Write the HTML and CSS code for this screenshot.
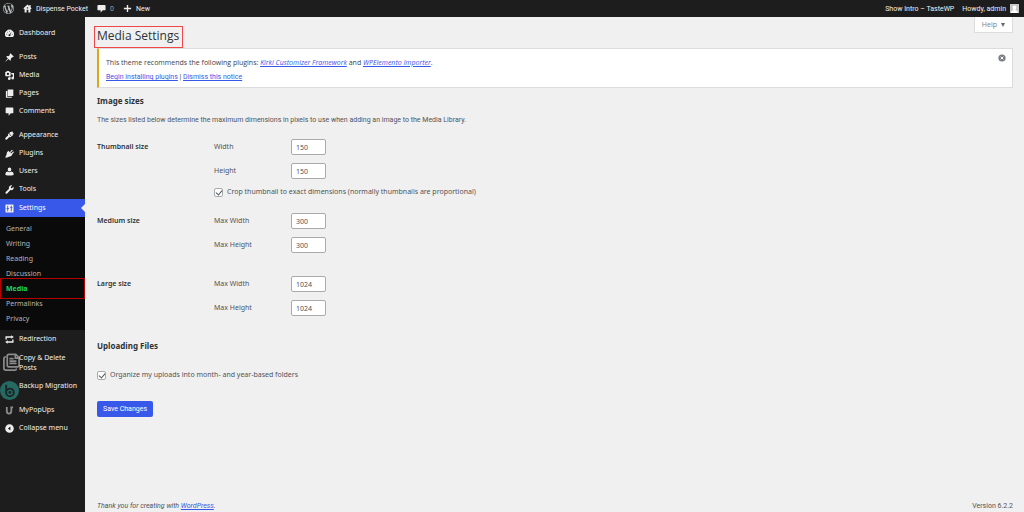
FILE: index.html
```html
<!DOCTYPE html>
<html lang="en">
<head>
<meta charset="utf-8">
<title>Media Settings</title>
<link rel="stylesheet" href="styles.css">
</head>
<body>
<header class="adminbar">
  <a class="bar-link logo" href="#" aria-label="About WordPress"><svg class="ic ic-wp" viewBox="0 0 20 20"><path fill-rule="evenodd" d="M20 10c0-5.510-4.490-10-10-10S0 4.490 0 10s4.490 10 10 10 10-4.490 10-10zM7.780 15.370L4.370 6.220c.55-.02 1.170-.08 1.170-.08.5-.06.44-1.130-.06-1.110 0 0-1.450.11-2.370.11-.18 0-.37 0-.58-.01C4.120 2.690 6.870 1.110 10 1.110c2.330 0 4.450.87 6.050 2.340-.68-.11-1.650.39-1.650 1.580 0 .74.45 1.360.9 2.100.35.61.55 1.360.55 2.460 0 1.490-1.400 5-1.400 5l-3.030-8.370c.54-.02.82-.17.82-.17.5-.05.44-1.250-.06-1.220 0 0-1.440.12-2.380.12-.87 0-2.330-.12-2.330-.12-.5-.03-.56 1.200-.06 1.220l.92.08 1.260 3.410zM17.410 10c.24-.64.74-1.870.43-4.250.7 1.290 1.050 2.710 1.050 4.250 0 3.290-1.730 6.240-4.400 7.780.97-2.590 1.940-5.200 2.920-7.780zM6.100 18.090C3.120 16.650 1.110 13.530 1.110 10c0-1.300.23-2.480.72-3.590C3.250 10.300 4.670 14.200 6.100 18.090zm4.030-6.630l2.580 6.980c-.86.29-1.760.45-2.710.45-.79 0-1.570-.11-2.290-.33.81-2.380 1.620-4.740 2.420-7.100z"/></svg></a>
  <a class="bar-link" href="#"><svg class="ic" viewBox="0 0 20 20"><path fill-rule="evenodd" d="M10 1l4 3.800V2h3v5.700l2 2-1.500 1.800-1-1V19h-13v-8.500l-1 1L1 9.700zM8 13v6h4v-6zM8.500 7v3h3V7z"/></svg>Dispense Pocket</a>
  <a class="bar-link dim" href="#"><svg class="ic" viewBox="0 0 20 20"><path d="M3 2h14q2 0 2 2v8q0 2-2 2h-4l-5 5v-5H3q-2 0-2-2V4q0-2 2-2z"/></svg>0</a>
  <a class="bar-link" href="#"><svg class="ic" viewBox="0 0 20 20"><path d="M8.500 2h3v6.500H18v3h-6.500V18h-3v-6.500H2v-3h6.500z"/></svg>New</a>
  <nav class="bar-right">
    <a class="bar-link" href="#">Show Intro – TasteWP</a>
    <a class="bar-link" href="#">Howdy, admin<svg class="avatar" viewBox="0 0 9 9"><path fill="#c8c8c8" d="M0 0h9v9H0z"/><path fill="#fff" d="M4.500 1.500c1.200 0 1.800.8 1.800 1.900S5.600 5.400 5.300 5.700c.2.700 2.500.8 2.700 3.300H1c.2-2.500 2.500-2.600 2.700-3.300-.3-.3-1-1.200-1-2.300s.6-1.900 1.800-1.900z"/></svg></a>
  </nav>
</header>
<div class="shell">
  <nav class="menu">
    <div class="group">
      <a class="item" href="#"><svg class="ic" viewBox="0 0 20 20"><path fill-rule="evenodd" d="M2.500 18h15A10 10 0 1 0 2.500 18zM10 4a1 1 0 1 1 0 2 1 1 0 0 1 0-2zM5.500 6a1 1 0 1 1 0 2 1 1 0 0 1 0-2zM4 10.500a1 1 0 1 1 0 2 1 1 0 0 1 0-2zm12 0a1 1 0 1 1 0 2 1 1 0 0 1 0-2zM14.600 6l-2.800 6.500a2.200 2.200 0 1 1-1.600-1z"/></svg>Dashboard</a>
    </div>
    <div class="group">
      <a class="item" href="#"><svg class="ic" viewBox="0 0 20 20"><path d="M10.400 2.500L12 .5 19.500 8l-2 1.600c-.9-.3-1.500-.2-2 .2l-2.600 2.600c.5 1.800.3 3.500-1.200 5l-3.800-3.900L2.300 18.500.5 19.500l.9-2L6.500 12.100 2.600 8.300c1.500-1.500 3.200-1.600 5-1.100L10.200 5c.4-.5.5-1.500.2-2.500z"/></svg>Posts</a>
      <a class="item" href="#"><svg class="ic" viewBox="0 0 20 20"><path fill-rule="evenodd" d="M2 1.500h1.500L4.500 0h4l1 1.500H11q1.500 0 1.500 1.500v7q0 1.500-1.500 1.500H2Q.5 11.500.5 10V3Q.5 1.500 2 1.500zM6.500 4a2.500 2.500 0 1 0 0 5 2.500 2.500 0 0 0 0-5zM14 4.500h6V16a3 3 0 1 1-2.700-3V8H14zM9.500 12.500h3V17a3 3 0 1 1-3-3z"/></svg>Media</a>
      <a class="item" href="#"><svg class="ic" viewBox="0 0 20 20"><path d="M6 15.500V1h12.500v14.500zM5 17h10v2.500H2V4.500h3z"/></svg>Pages</a>
      <a class="item" href="#"><svg class="ic" viewBox="0 0 20 20"><path d="M3 1h14q1.500 0 1.500 1.500v10q0 1.500-1.500 1.500h-4l-5 5.500V14H3q-1.500 0-1.500-1.500v-10Q1.500 1 3 1z"/></svg>Comments</a>
    </div>
    <div class="group">
      <a class="item" href="#"><svg class="ic" viewBox="0 0 20 20"><path d="M15 12L9.200 4.700 12 2q2 1 4-1.500l3.500 6q-3.500 1-2.500 3.500zM8.400 5.500l5.600 7.200-1.800 1.300q-2-1-3.200 0-2.500 4-6 5.200-3 .5-2.500-2.500Q2.500 12.500 6.500 10.500q1-1.300 0-3.500z"/></svg>Appearance</a>
      <a class="item" href="#"><svg class="ic" viewBox="0 0 20 20"><path d="M7.500 4l3 3 3.800-4.500q1.200-1.200 2.200-.2t-.2 2.200L12 8.500l1.500 1.500 4-4q1.200-1 2 0t-.2 2L15.500 12l1 1q-3 4.500-8 4L5 19l-4 .5L1.500 16l2-3.500Q3 7 7.500 4z"/></svg>Plugins</a>
      <a class="item" href="#"><svg class="ic" viewBox="0 0 20 20"><path d="M10 1a4 4.500 0 0 1 0 9 4 4.500 0 0 1 0-9zM6 10q4 3 8 0 5 1 5 4.500V17.500q-9 3-18 0v-3Q1 11 6 10z"/></svg>Users</a>
      <a class="item" href="#"><svg class="ic" viewBox="0 0 20 20"><path d="M17.700 10c-1.600 1.600-3.700 2-5.600 1.300l-7.300 7.400c-1 1-2.300 1-3.200.1s-.9-2.300.1-3.200L9 8.300C8.200 6.400 8.500 4.100 10.100 2.500S14 .4 16 1.200L12.700 4.700l.5 2.100 2.100.5 3.500-3.400c.9 2 .5 4.500-1.100 6.100z"/></svg>Tools</a>
    </div>
    <a class="item current" href="#"><svg class="ic" viewBox="0 0 20 20"><path fill-rule="evenodd" d="M2 1h16q1 0 1 1v16q0 1-1 1H2q-1 0-1-1V2q0-1 1-1zm3 3v5H3.500v2H5v5h2v-5h1.500V9H7V4zm8 0v2l-2.500 2.500H13V16h2V8.500h2.500L15 6V4z"/></svg>Settings</a>
    <div class="submenu">
      <a class="sub" href="#">General</a>
      <a class="sub" href="#">Writing</a>
      <a class="sub" href="#">Reading</a>
      <a class="sub" href="#">Discussion</a>
      <a class="sub active" href="#">Media</a>
      <a class="sub" href="#">Permalinks</a>
      <a class="sub" href="#">Privacy</a>
    </div>
    <a class="item" href="#"><svg class="ic" viewBox="0 0 20 20"><path d="M1 10V3h13V.5L19.500 4.500 14 8.500V6H4v4zM19 10v7H6v2.500L.5 15.500 6 11.500V14h10v-4z"/></svg>Redirection</a>
    <a class="item tall" href="#"><svg class="ic-big" viewBox="0 0 20 20" fill="none" stroke="#8b8b8b" stroke-width="1.800" stroke-linecap="round" stroke-linejoin="round"><path d="M7 1.500h7.500L18 5v8q0 1.500-1.500 1.500H7q-1.500 0-1.500-1.500V3Q5.500 1.500 7 1.500zM14 2v3.500h4M8.500 6h3M8.500 8.500h6M8.500 11h6M3.500 4Q2 4.500 2 6v10q0 2 2 2h9.500q1.500 0 1.500-1"/></svg><span>Copy &amp; Delete<br>Posts</span></a>
    <a class="item tall backup" href="#"><svg class="ic-big" viewBox="0 0 20 20"><circle cx="10" cy="10" r="10" fill="#246a63"/><path fill="none" stroke="#1d2424" stroke-width="2" d="M6.500 4v8a4 4 0 1 0 4-4q-2 0-4 2"/><circle cx="10.500" cy="12" r="1.500" fill="#1d2424"/></svg><span>Backup Migration</span></a>
    <a class="item" href="#"><svg class="ic" viewBox="0 0 20 20"><path fill="none" stroke="#8b8b8b" stroke-width="4" d="M4 2v9q0 6 5 6t5-6V1M14 3h4"/></svg>MyPopUps</a>
    <button class="item" type="button"><svg class="ic" viewBox="0 0 20 20"><path fill-rule="evenodd" d="M10 .5a9.500 9.500 0 1 1 0 19 9.500 9.500 0 0 1 0-19zm2 5L6.500 10l5.500 4.500z"/></svg>Collapse menu</button>
  </nav>
  <main class="content">
    <div class="top">
      <h1 class="title">Media Settings</h1>
      <button class="help" type="button">Help <span class="caret"></span></button>
    </div>
    <section class="notice">
      <div>
        <p>This theme recommends the following plugins: <a href="#"><em>Kirki Customizer Framework</em></a> and <a href="#"><em>WPElemento Importer</em></a>.</p>
        <p class="actions"><a href="#">Begin installing plugins</a> | <a href="#">Dismiss this notice</a></p>
      </div>
      <button class="dismiss" type="button" aria-label="Dismiss"><svg viewBox="0 0 20 20"><circle cx="10" cy="10" r="9" fill="#787c82"/><path stroke="#fff" stroke-width="2.500" d="M6.500 6.500l7 7M13.500 6.500l-7 7"/></svg></button>
    </section>
    <form class="form">
      <h2>Image sizes</h2>
      <p class="intro">The sizes listed below determine the maximum dimensions in pixels to use when adding an image to the Media Library.</p>
      <div class="row" role="group" aria-labelledby="thumb">
        <h3 id="thumb">Thumbnail size</h3>
        <div class="fields">
          <label for="tw">Width</label><input class="num" id="tw" type="number" value="150">
          <label for="th">Height</label><input class="num" id="th" type="number" value="150">
          <label class="check wide"><input type="checkbox" checked>Crop thumbnail to exact dimensions (normally thumbnails are proportional)</label>
        </div>
      </div>
      <div class="row medium" role="group" aria-labelledby="med">
        <h3 id="med">Medium size</h3>
        <div class="fields">
          <label for="mw">Max Width</label><input class="num" id="mw" type="number" value="300">
          <label for="mh">Max Height</label><input class="num" id="mh" type="number" value="300">
        </div>
      </div>
      <div class="row large" role="group" aria-labelledby="lrg">
        <h3 id="lrg">Large size</h3>
        <div class="fields">
          <label for="lw">Max Width</label><input class="num" id="lw" type="number" value="1024">
          <label for="lh">Max Height</label><input class="num" id="lh" type="number" value="1024">
        </div>
      </div>
      <h2 class="uploading">Uploading Files</h2>
      <label class="check"><input type="checkbox" checked>Organize my uploads into month- and year-based folders</label>
      <button class="save" type="submit">Save Changes</button>
    </form>
    <footer class="footer">
      <em>Thank you for creating with <a href="#">WordPress</a>.</em>
      <span>Version 6.2.2</span>
    </footer>
  </main>
</div>
</body>
</html>
```

FILE: styles.css
```css
* { box-sizing: border-box; }
body {
  margin: 0;
  min-height: 100vh;
  display: flex;
  flex-direction: column;
  background: #f0f0f0;
  color: #50545a;
  font: 7px/10px "Noto Sans", "Open Sans", sans-serif;
}
h1, h2, h3, p { margin: 0; }
button { font: inherit; cursor: pointer; }
a { color: #3858e9; }
svg { display: block; flex: none; }

.title, .help, .notice { font-family: "Open Sans", "Noto Sans", sans-serif; }
.adminbar, .actions, .intro, .save, .footer { font-family: Roboto, "Open Sans", sans-serif; }

.adminbar {
  display: flex;
  align-items: center;
  gap: 9px;
  height: 17px;
  padding: 0 5px 0 3px;
  background: #1d1d1d;
}
.bar-link {
  display: flex;
  align-items: center;
  gap: 4px;
  color: #f0f0f0;
  text-decoration: none;
}
.dim { color: #a0a0a0; }
.bar-right { display: flex; gap: 8px; margin-left: auto; }
.ic { width: 9px; height: 9px; fill: #eee; }
.ic-wp { width: 11px; height: 11px; fill: #b8bcc0; }
.avatar { width: 9px; height: 9px; }

.shell { display: flex; flex: 1; }
.menu {
  width: 85px;
  flex: none;
  display: flex;
  flex-direction: column;
  padding-top: 7px;
  background: #1d1d1d;
}
.group { margin-bottom: 6px; }
.group + .group + .group { margin-bottom: 1px; }
.item {
  display: flex;
  align-items: center;
  gap: 5px;
  height: 18px;
  padding: 0 0 0 5px;
  border: 0;
  background: none;
  color: #f0f0f0;
  text-align: left;
  text-decoration: none;
}
.current { position: relative; background: #3858e9; color: #fff; }
.current::after {
  content: "";
  position: absolute;
  right: 0;
  top: 5px;
  border: 4px solid transparent;
  border-left: 0;
  border-right-color: #f0f0f0;
}
.submenu { padding: 4px 0; background: #0a0a0a; }
.sub {
  display: block;
  height: 15px;
  padding-left: 6px;
  line-height: 15px;
  color: #b4b4b4;
  text-decoration: none;
}
.active {
  position: relative;
  border-left: 1px solid #6a9a3c;
  padding-left: 5px;
  color: #1ed760;
  font-weight: 700;
}
.active::after {
  content: "";
  position: absolute;
  inset: -3px 0 -3px -1px;
  border: 1px solid #b80000;
}
.tall { height: 28px; align-items: flex-start; gap: 0; padding: 5px 0 0 2px; }
.tall span { margin-left: -2px; z-index: 1; }
.ic-big { width: 19px; height: 19px; }
.backup { height: 25px; padding-left: 0; }
.backup span { margin-left: 0; }

.content {
  flex: 1;
  display: flex;
  flex-direction: column;
  padding: 0 11px 1px 12px;
}
.top { display: flex; justify-content: space-between; align-items: flex-start; }
.title {
  margin: 9px 0 0 -3px;
  padding: 0 3px 2px 2px;
  border: 1px solid #f04848;
  font-size: 12px;
  line-height: 18px;
  font-weight: 400;
  color: #2c3338;
}
.help {
  display: flex;
  align-items: center;
  gap: 4px;
  height: 16px;
  padding: 0 7px;
  border: 1px solid #dcdcde;
  border-top: 0;
  background: #fff;
  color: #787c82;
}
.caret { border: 3px solid transparent; border-top: 4px solid #646970; border-bottom: 0; }
.help .caret { border-left-width: 2px; border-right-width: 2px; }
.notice {
  display: flex;
  justify-content: space-between;
  align-items: flex-start;
  min-height: 40px;
  padding: 9px 6px 0 7px;
  border: 1px solid #dcdcde;
  border-left: 2px solid #dba617;
  background: #fff;
  color: #3c434a;
}
.notice p + p { margin-top: 4px; }
.dismiss { margin-top: -4px; padding: 0; border: 0; background: none; }
.dismiss svg { width: 8px; height: 8px; }

.form { display: flex; flex-direction: column; align-items: flex-start; }
h2 { margin-top: 7px; font-size: 8px; line-height: 12px; color: #2c3338; }
.intro { margin-top: 8px; }
.row {
  display: grid;
  grid-template-columns: 117px 1fr;
  margin-top: 14px;
}
h3 { font-size: 7px; line-height: 16px; font-weight: 600; color: #2c3338; }
.fields {
  display: grid;
  grid-template-columns: 77px 1fr;
  gap: 8px 0;
  align-items: center;
}
.num {
  width: 35px;
  height: 16px;
  padding: 0 4px;
  border: 1px solid #a8aaad;
  border-radius: 2px;
  background: #fff;
  color: #50545a;
  font: inherit;
  appearance: textfield;
}
.num::-webkit-inner-spin-button { appearance: none; margin: 0; }
.check { display: flex; align-items: center; gap: 4px; }
.wide { grid-column: 1 / 3; }
.check input {
  appearance: none;
  width: 9px;
  height: 9px;
  margin: 0;
  border: 1px solid #a8aaad;
  border-radius: 2px;
  background: #fff;
  display: grid;
  place-items: center;
}
.check input:checked::before {
  content: "";
  width: 3px;
  height: 5px;
  border: solid #50575e;
  border-width: 0 1px 1px 0;
  transform: rotate(40deg);
}
.medium { margin-top: 16px; }
.large { margin-top: 23px; }
.uploading { margin: 24px 0 18px; }
.save {
  height: 16px;
  margin-top: 21px;
  padding: 0 6px;
  border: 0;
  border-radius: 2px;
  background: #3858e9;
  color: #fff;
}
.footer { display: flex; justify-content: space-between; margin-top: auto; }
```
